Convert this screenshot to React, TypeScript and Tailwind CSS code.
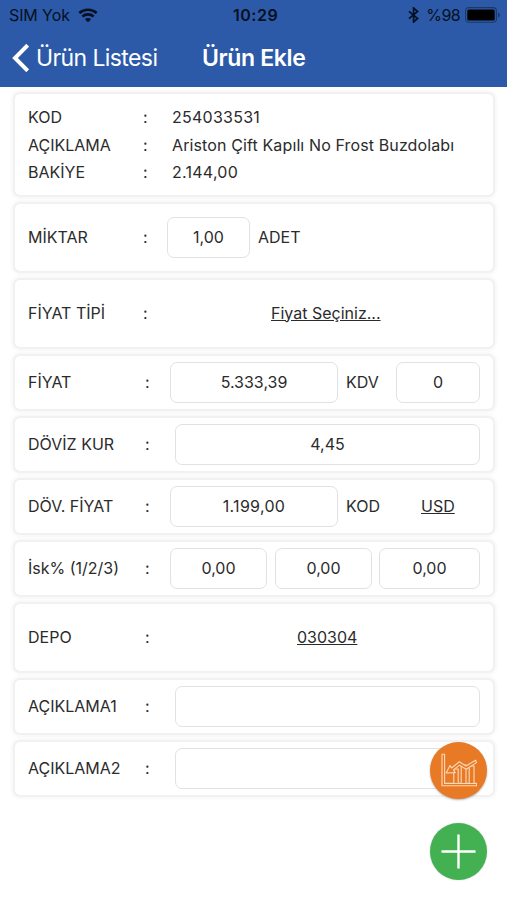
import type { ReactNode } from "react";
import { clsx } from "clsx";

type CardProps = {
  children: ReactNode;
  className?: string;
};

type LabelProps = {
  text: string;
  wide?: boolean;
};

type FieldProps = {
  className?: string;
  label: string;
  value: string;
};

function Card({ children, className = "h-[57px]" }: CardProps) {
  return (
    <section
      className={clsx(
        "flex shrink-0 items-center rounded-[7px] border-2 border-[#f1f1f1] bg-white pl-[13px] shadow-[0_0_3px_2px_#f8f8f8]",
        className,
      )}
    >
      {children}
    </section>
  );
}

function Label({ text, wide = false }: LabelProps) {
  return (
    <>
      <span className={clsx("shrink-0 pb-[2px]", wide ? "w-[117px]" : "w-[115px]")}>
        {text}
      </span>
      <span className="w-[5px] shrink-0 pb-[2px]">:</span>
    </>
  );
}

function Field({ className, label, value }: FieldProps) {
  return (
    <input
      aria-label={label}
      className={clsx(
        "h-[41px] shrink-0 rounded-[7px] border border-[#e2e2e2] bg-white pb-[2px] text-center outline-none",
        className,
      )}
      defaultValue={value}
    />
  );
}

function StatusBar() {
  return (
    <div className="flex h-[30px] items-center pl-[9px] pr-[6px] text-[16px] leading-5 text-[#061022]">
      <div className="flex w-[224px] items-center">
        <span className="w-[69px] tracking-[-0.1px]">SIM Yok</span>
        <svg className="h-[15px] w-5" viewBox="0 0 20 15" fill="none">
          <path d="M1.3 5.1C6.3.6 13.7.6 18.7 5.1" stroke="currentColor" strokeWidth="2.7" />
          <path d="M4.4 8.5c3.2-2.8 8-2.8 11.2 0" stroke="currentColor" strokeWidth="2.6" />
          <path d="M10 14.3 6.9 11.2c1.8-1.6 4.4-1.6 6.2 0z" fill="currentColor" />
        </svg>
      </div>
      <span className="font-semibold tracking-[0.5px]">10:29</span>
      <div className="ml-auto flex items-center">
        <svg className="mr-[7px] h-4 w-[11px]" viewBox="0 0 11 16" fill="none">
          <path d="m1 4.3 8.6 7.2L5.6 15V1l4 3.5L1 11.7" stroke="currentColor" strokeWidth="1.7" />
        </svg>
        <span className="mr-[5px] tracking-[-0.6px]">%98</span>
        <svg className="h-4 w-9" viewBox="0 0 36 16">
          <rect x=".6" y=".6" width="30.8" height="14.6" rx="3.2" fill="none" stroke="#1b3967" strokeWidth="1.1" />
          <rect x="2.3" y="2.5" width="27.4" height="11" rx="1.6" fill="#000" />
          <path d="M33 5.5c2.4 1 2.4 4 0 5z" fill="#1b3967" />
        </svg>
      </div>
    </div>
  );
}

function ChartIcon() {
  return (
    <svg
      className="h-[35px] w-9"
      viewBox="0 0 36 35"
      fill="#e87a25"
      stroke="#fbd9bb"
      strokeWidth="1.1"
      strokeLinejoin="round"
    >
      <path d="M1 1.2h2.6v29.2h32v2.4H1z" />
      <path d="M12.8 30V16h4.4v14M20.2 30V12H25v18M28.2 30V13H33v17" />
      <path d="m5.2 20 3.8-7.4 1.5 2.4 7.8-6.2 6.7 4.2 9.6-5.8.9 2.4-10.3 6.7-6.7-4.2-6 4.8 1.7 2.7z" />
    </svg>
  );
}

export default function App() {
  return (
    <div className="relative flex h-[900px] w-[507px] flex-col overflow-hidden bg-white font-['Inter','Liberation_Sans',sans-serif] text-[16px] leading-5 text-[#2b2b2b]">
      <header className="h-[87px] shrink-0 bg-[#2c5aa8]">
        <StatusBar />
        <nav className="flex h-[55px] items-center pl-[12px] text-[23px] leading-7 text-white">
          <svg className="mr-[7px] h-7 w-[17px]" viewBox="0 0 17 28" fill="none">
            <path d="M15.7 1.2 3 14l12.7 12.8" stroke="currentColor" strokeWidth="4" />
          </svg>
          <span className="w-[166px] tracking-[-0.6px]">Ürün Listesi</span>
          <h1 className="font-semibold tracking-[-0.35px]">Ürün Ekle</h1>
        </nav>
      </header>

      <main className="flex flex-col gap-[5px] pl-[13px] pr-[12px] pt-[5px]">
        <Card className="h-[105px]">
          <dl className="grid grid-cols-[115px_29px_auto] auto-rows-[27.6px] items-center">
            <dt>KOD</dt>
            <span>:</span>
            <dd className="tracking-[0.25px]">254033531</dd>
            <dt>AÇIKLAMA</dt>
            <span>:</span>
            <dd className="tracking-[0.12px]">Ariston Çift Kapılı No Frost Buzdolabı</dd>
            <dt>BAKİYE</dt>
            <span>:</span>
            <dd className="tracking-[0.25px]">2.144,00</dd>
          </dl>
        </Card>

        <Card className="h-[71px]">
          <Label text="MİKTAR" />
          <Field className="ml-[19px] w-[83px]" label="Miktar" value="1,00" />
          <span className="ml-[8px] pb-[2px]">ADET</span>
        </Card>

        <Card className="h-[71px]">
          <Label text="FİYAT TİPİ" />
          <a className="ml-[123px] pb-[2px] underline" href="#fiyat">
            Fiyat Seçiniz...
          </a>
        </Card>

        <Card>
          <Label text="FİYAT" wide />
          <Field className="ml-[20px] w-[168px]" label="Fiyat" value="5.333,39" />
          <span className="ml-[8px] w-[50px] pb-[2px]">KDV</span>
          <Field className="w-[84px]" label="KDV" value="0" />
        </Card>

        <Card>
          <Label text="DÖVİZ KUR" wide />
          <Field className="ml-[25px] w-[305px]" label="Döviz kur" value="4,45" />
        </Card>

        <Card>
          <Label text="DÖV. FİYAT" wide />
          <Field
            className="ml-[20px] w-[168px] tracking-[0.3px]"
            label="Döviz fiyat"
            value="1.199,00"
          />
          <span className="ml-[8px] w-[75px] pb-[2px]">KOD</span>
          <a className="pb-[2px] underline" href="#kod">
            USD
          </a>
        </Card>

        <Card>
          <Label text="İsk% (1/2/3)" wide />
          <Field className="ml-[20px] w-[97px]" label="İskonto 1" value="0,00" />
          <Field className="ml-[8px] w-[97px]" label="İskonto 2" value="0,00" />
          <Field className="ml-[7px] w-[101px]" label="İskonto 3" value="0,00" />
        </Card>

        <Card className="h-[71px]">
          <Label text="DEPO" wide />
          <a className="ml-[147px] pb-[2px] underline" href="#depo">
            030304
          </a>
        </Card>

        <Card>
          <Label text="AÇIKLAMA1" wide />
          <Field className="ml-[25px] w-[305px]" label="Açıklama 1" value="" />
        </Card>

        <Card>
          <Label text="AÇIKLAMA2" wide />
          <Field className="ml-[25px] w-[305px]" label="Açıklama 2" value="" />
        </Card>
      </main>

      {/* floating actions */}
      <div className="absolute bottom-[20px] right-[20px] flex flex-col gap-[24px]">
        <button
          aria-label="Grafik"
          className="flex h-[57px] w-[57px] items-center justify-center rounded-full bg-[#e87a25] shadow-[0_1px_2px_rgba(0,0,0,0.3)]"
        >
          <ChartIcon />
        </button>
        <button
          aria-label="Ekle"
          className="flex h-[57px] w-[57px] items-center justify-center rounded-full bg-[#43b052] shadow-[0_0_2px_rgba(0,0,0,0.2)]"
        >
          <svg className="h-[35px] w-[35px]" viewBox="0 0 35 35" fill="none">
            <path d="M17.5.5v34M.5 17.5h34" stroke="white" strokeWidth="2.4" />
          </svg>
        </button>
      </div>
    </div>
  );
}
